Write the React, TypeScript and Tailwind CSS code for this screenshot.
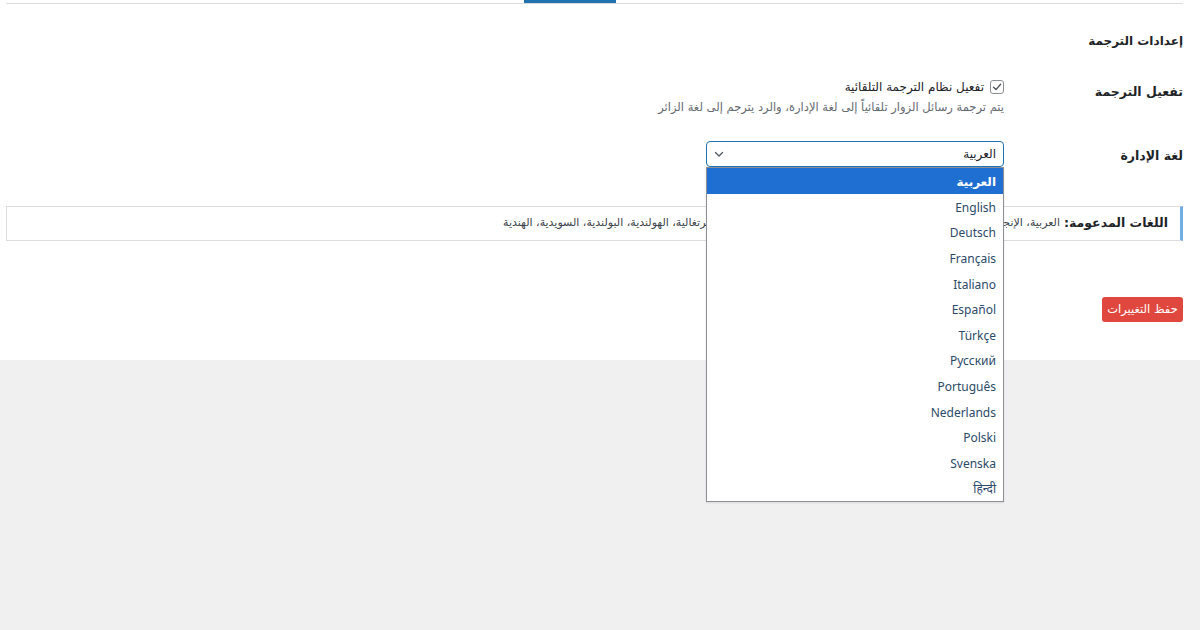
import React from "react";

const LANGS = [
  "العربية",
  "English",
  "Deutsch",
  "Français",
  "Italiano",
  "Español",
  "Türkçe",
  "Русский",
  "Português",
  "Nederlands",
  "Polski",
  "Svenska",
  "हिन्दी",
];

const arabic = { fontFamily: '"DejaVu Sans", "Noto Sans", sans-serif' };
const latin = { fontFamily: '"Noto Sans", "DejaVu Sans", sans-serif' };

function Chevron() {
  return (
    <svg width="12" height="12" viewBox="0 0 12 12" fill="none">
      <path d="M2.5 4.5 6 8l3.5-3.5" stroke="#50575e" strokeWidth="1.3" strokeLinecap="round" strokeLinejoin="round" />
    </svg>
  );
}

function CheckBox() {
  return (
    <span className="flex h-[14px] w-[14px] items-center justify-center rounded-[3px] border border-[#8c8f94] bg-white">
      <svg width="12" height="12" viewBox="0 0 12 12" fill="none">
        <path d="M2.5 6.2 5 8.6l4.6-5.4" stroke="#50575e" strokeWidth="1.4" strokeLinecap="round" strokeLinejoin="round" />
      </svg>
    </span>
  );
}

export default function App() {
  return (
    <div className="flex h-[630px] w-[1200px] flex-col bg-[#f0f0f1] text-[#1d2327]" style={arabic}>
      <div className="h-[360px] bg-white pl-[6px] pr-[17px]">
        {/* tab strip */}
        <div className="flex h-[4px] border-b border-[#dcdcde]" dir="ltr">
          <div className="ml-[518px] h-[3px] w-[92px] bg-[#2271b1]" />
        </div>

        <div dir="rtl">
          <h2 className="mt-[28px] text-[12px] leading-[18px] font-semibold">إعدادات الترجمة</h2>

          {/* auto-translation toggle */}
          <div className="mt-[29px] flex">
            <div className="w-[179px] pt-[4px] text-[12.5px] leading-[18px] font-bold">تفعيل الترجمة</div>
            <div className="flex flex-col">
              <label className="flex items-center gap-[6px] text-[12px] leading-[16px]">
                <CheckBox />
                <span>تفعيل نظام الترجمة التلقائية</span>
              </label>
              <p className="mt-[4px] text-[11.5px] leading-[16px] text-[#646970]">
                يتم ترجمة رسائل الزوار تلقائياً إلى لغة الإدارة، والرد يترجم إلى لغة الزائر
              </p>
            </div>
          </div>

          {/* admin language */}
          <div className="mt-[26px] flex">
            <div className="w-[179px] pt-[6px] text-[12.5px] leading-[18px] font-bold">لغة الإدارة</div>
            <div className="relative">
              <div className="flex h-[26px] w-[298px] items-center justify-between rounded-[4px] border border-[#2271b1] bg-white pr-[7px] pl-[6px] text-[12px]">
                <span>العربية</span>
                <Chevron />
              </div>
              <ul className="absolute top-[26px] right-0 z-10 w-[298px] border border-[#8c8f94] bg-white shadow-[0_1px_2px_rgba(0,0,0,0.1)]">
                {LANGS.map((l, i) => (
                  <li
                    key={l}
                    className={
                      i === 0
                        ? "flex h-[25.6px] items-center bg-[#1f6fd3] pt-[3px] pr-[7px] text-[12px] font-bold text-white"
                        : "flex h-[25.6px] items-center pt-[3px] pr-[7px] text-[12px] text-[#2c4a68]"
                    }
                    style={i === 0 ? arabic : latin}
                  >
                    {l}
                  </li>
                ))}
              </ul>
            </div>
          </div>

          {/* supported languages notice */}
          <div className="mt-[39px] flex h-[35px] items-center border border-r-[3px] border-[#dcdcde] border-r-[#72aee6] pr-[12px]">
            <span className="text-[12.5px] font-bold">اللغات المدعومة:</span>
            <span className="mr-[4px] text-[11px] text-[#3c434a]">
              العربية، الإنجليزية، الألمانية، الفرنسية، الإيطالية، الإسبانية، التركية، الروسية، البرتغالية، الهولندية، البولندية، السويدية، الهندية
            </span>
          </div>

          <div className="mt-[56px] flex">
            <button className="h-[25px] w-[81px] rounded-[3px] bg-[#e0473e] text-[11.5px] text-white">
              حفظ التغييرات
            </button>
          </div>
        </div>
      </div>
    </div>
  );
}
